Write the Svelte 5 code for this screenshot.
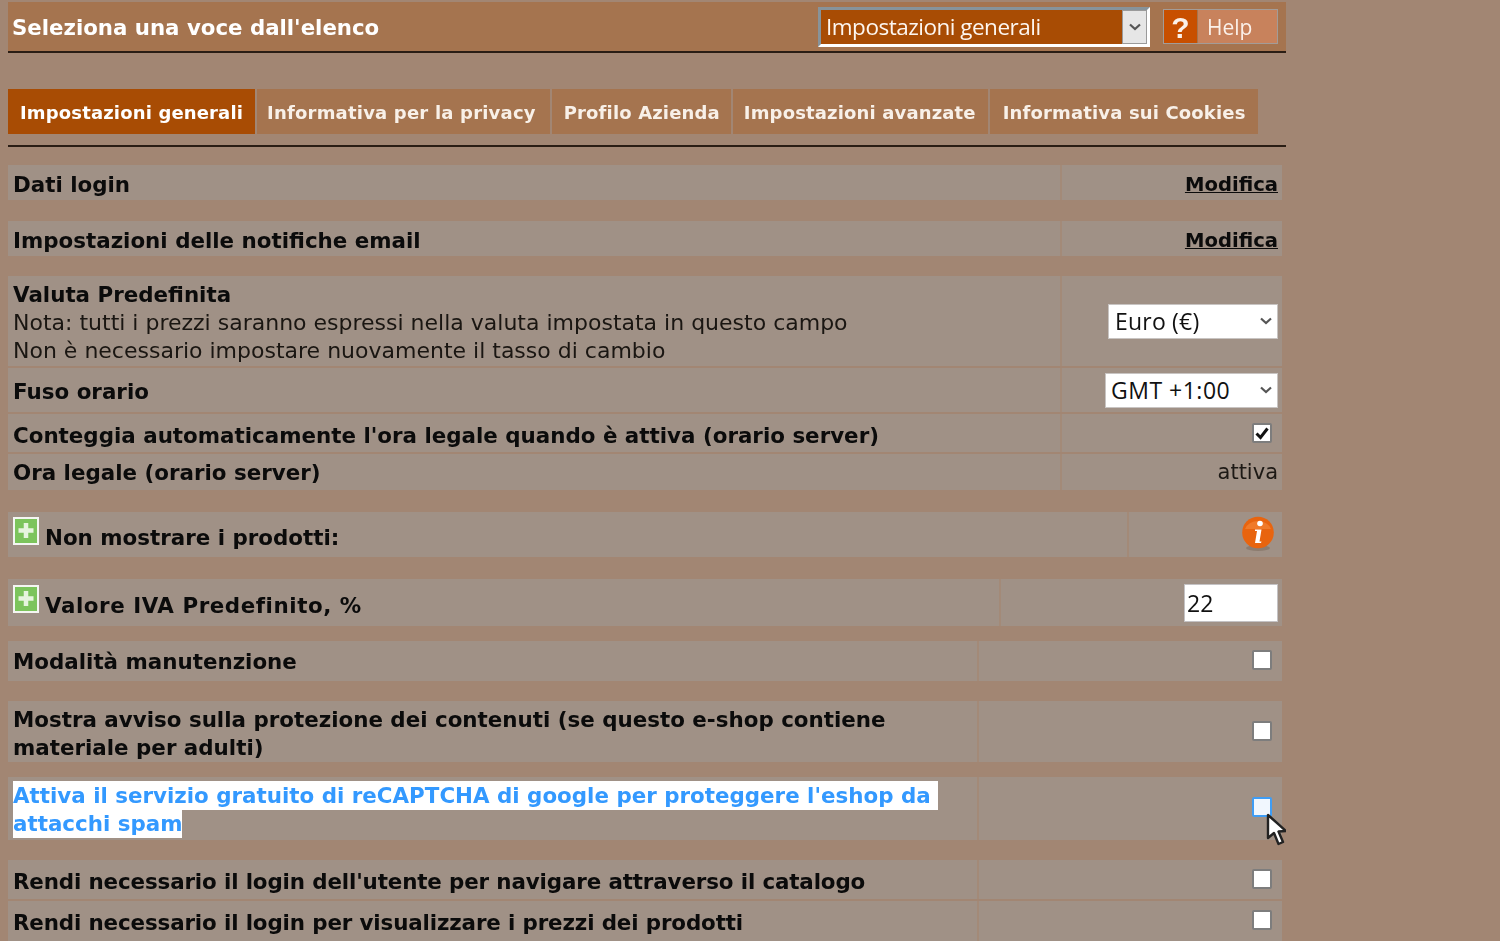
<script>
	const tabs = ['Impostazioni generali', 'Informativa per la privacy', 'Profilo Azienda', 'Impostazioni avanzate', 'Informativa sui Cookies'];
</script>

{#snippet check(on = false, focus = false)}
	<span class="check" class:focus>
		{#if on}
			<svg viewBox="0 0 16 16" width="16" height="16"><path d="M2.5 8.5 L6.5 12.5 L13.5 3.5" fill="none" stroke="#111" stroke-width="3"/></svg>
		{/if}
	</span>
{/snippet}

{#snippet plus()}
	<span class="plus"><svg viewBox="0 0 26 28" width="26" height="28"><rect x="1" y="1" width="24" height="26" fill="#7cc45c" stroke="#f4f6f2" stroke-width="2"/><path d="M13 6v15M5.500 13.500h15" stroke="#e6f4de" stroke-width="4.500"/></svg></span>
{/snippet}

{#snippet chevron()}
	<svg class="chev" viewBox="0 0 12 8" width="12" height="8"><path d="M1 1.500 L6 6 L11 1.500" fill="none" stroke="#555" stroke-width="2.200"/></svg>
{/snippet}

<main>
	<header class="top">
		<h1>Seleziona una voce dall'elenco</h1>
		<div class="top-select">
			<span>Impostazioni generali</span>
			<i>{@render chevron()}</i>
		</div>
		<a class="help" href="#help"><b>?</b><span>Help</span></a>
	</header>

	<nav class="tabs">
		{#each tabs as tab, i}
			<a href="#tab" class:active={i === 0}>{tab}</a>
		{/each}
	</nav>

	<section class="rows">
		<div class="row wide h35">
			<div class="label">Dati login</div>
			<div class="val"><a href="#edit">Modifica</a></div>
		</div>
		<div class="row wide h35 gap21">
			<div class="label">Impostazioni delle notifiche email</div>
			<div class="val"><a href="#edit">Modifica</a></div>
		</div>

		<div class="row wide gap20 h90">
			<div class="label">
				Valuta Predefinita
				<p>Nota: tutti i prezzi saranno espressi nella valuta impostata in questo campo</p>
				<p>Non è necessario impostare nuovamente il tasso di cambio</p>
			</div>
			<div class="val"><div class="select w170">Euro (€){@render chevron()}</div></div>
		</div>
		<div class="row wide thin h44">
			<div class="label">Fuso orario</div>
			<div class="val"><div class="select w173">GMT +1:00{@render chevron()}</div></div>
		</div>
		<div class="row wide thin h38">
			<div class="label">Conteggia automaticamente l'ora legale quando è attiva (orario server)</div>
			<div class="val up">{@render check(true)}</div>
		</div>
		<div class="row wide thin h36">
			<div class="label">Ora legale (orario server)</div>
			<div class="val plain">attiva</div>
		</div>

		<div class="row info gap22 h45">
			<div class="label icon">{@render plus()}Non mostrare i prodotti:</div>
			<div class="val">
				<svg class="i" viewBox="0 0 34 36" width="34" height="36">
					<ellipse cx="17" cy="32" rx="12" ry="3" fill="#7a675a" opacity="0.5"/>
					<circle cx="17" cy="16.500" r="15.800" fill="#e8640f"/>
					<path d="M4 13a13.500 11 0 0 1 26 0z" fill="#f5893a" opacity="0.6"/>
					<circle cx="19" cy="7.500" r="2.800" fill="#fff"/>
					<path d="M14 13.500h6.500l-2 12h2l-.5 1.500h-6l2-12h-2z" fill="#fff"/>
				</svg>
			</div>
		</div>

		<div class="row vat gap22 h47">
			<div class="label icon loose">{@render plus()}Valore IVA Predefinito, %</div>
			<div class="val"><input class="field" value="22" /></div>
		</div>

		<div class="row main-col gap15 h40">
			<div class="label">Modalità manutenzione</div>
			<div class="val">{@render check()}</div>
		</div>
		<div class="row main-col gap20 h61">
			<div class="label">Mostra avviso sulla protezione dei contenuti (se questo e-shop contiene<br />materiale per adulti)</div>
			<div class="val">{@render check()}</div>
		</div>
		<div class="row main-col gap15 h63">
			<div class="label selected"><span class="picked">Attiva il servizio gratuito di reCAPTCHA di google per proteggere l'eshop da&nbsp;<br />attacchi spam</span></div>
			<div class="val up8">
				{@render check(false, true)}
				<svg class="cursor" viewBox="0 0 22 34" width="22" height="34">
					<path d="M2 2 L2 25 L8 20 L12.500 31 L17 29 L12.500 18.500 L20 18 Z" fill="#fff" stroke="#222" stroke-width="2.400" stroke-linejoin="round"/>
				</svg>
			</div>
		</div>
		<div class="row main-col gap20 h39">
			<div class="label tight">Rendi necessario il login dell'utente per navigare attraverso il catalogo</div>
			<div class="val">{@render check()}</div>
		</div>
		<div class="row main-col thin h40">
			<div class="label tight">Rendi necessario il login per visualizzare i prezzi dei prodotti</div>
			<div class="val">{@render check()}</div>
		</div>
	</section>
</main>

<style>
	:global(body) {
		margin: 0;
		background: #a28673;
	}

	main {
		width: 1278px;
		height: 941px;
		margin-left: 8px;
		padding-top: 2px;
		box-sizing: border-box;
		overflow: hidden;
		font-family: "DejaVu Sans", Verdana, sans-serif;
		filter: blur(0.4px);
	}

	.top {
		display: flex;
		align-items: center;
		height: 49px;
		margin-left: -2px;
		padding-left: 6px;
		background: #a5744f;
		border-bottom: 2px solid #2a1d14;
	}

	h1 {
		flex: 1;
		margin: 0;
		padding-top: 2px;
		color: #fff;
		font-size: 21.300px;
		font-weight: 700;
	}

	.top-select {
		display: flex;
		width: 332px;
		height: 40px;
		box-sizing: border-box;
		border: 3px solid #fff;
		border-top-color: #87939a;
		border-left-color: #87939a;
		background: #a84c04;
		color: #fdf6f0;
		font-size: 22.500px;
		font-family: "Open Sans", "DejaVu Sans", sans-serif;
	}

	.top-select span {
		flex: 1;
		padding: 1px 0 0 5px;
		line-height: 32px;
		letter-spacing: -0.500px;
	}

	.top-select i {
		display: flex;
		width: 25px;
		align-items: center;
		justify-content: center;
		background: #e6e6e6;
		border: 1px solid #9a9a9a;
		box-sizing: border-box;
	}

	.help {
		display: flex;
		width: 115px;
		height: 35px;
		margin: 0 8px 0 13px;
		box-sizing: border-box;
		border: 1px solid #a39c98;
		color: #fbf1ea;
		text-decoration: none;
		font-size: 21px;
		line-height: 35px;
	}

	.help b {
		width: 33px;
		background: #c84f00;
		text-align: center;
		font-size: 30px;
		font-family: "Liberation Sans", sans-serif;
		margin-right: 1px;
	}

	.help span {
		flex: 1;
		background: #c8825c;
		padding-left: 9px;
		font-family: "Open Sans", sans-serif;
	}

	.tabs {
		display: flex;
		gap: 2px;
		height: 45px;
		margin-top: 36px;
		padding-bottom: 11px;
		border-bottom: 2px solid #2a1d14;
	}

	.tabs a {
		padding: 0 12px;
		background: #a5744f;
		color: #f8f0e8;
		font-size: 18px;
		font-weight: 700;
		line-height: 47px;
		letter-spacing: 0.150px;
		text-decoration: none;
	}

	.tabs a:nth-child(2) { padding: 0 14px 0 10px; letter-spacing: 0.200px; }
	.tabs a:nth-child(3) { padding-right: 11px; }
	.tabs a:nth-child(4) { padding-left: 11px; }
	.tabs a:nth-child(5) { padding-left: 13px; }

	.tabs a.active {
		background: #a84c04;
		color: #fff;
	}

	.rows {
		padding-top: 18px;
		width: 1274px;
	}

	.row {
		display: grid;
		background: #a09186;
		color: #0b0b0b;
		font-size: 21.400px;
		line-height: 28px;
	}

	.row.wide { grid-template-columns: 1052px 1fr; }
	.row.info { grid-template-columns: 1119px 1fr; }
	.row.vat { grid-template-columns: 991px 1fr; }
	.row.main-col { grid-template-columns: 969px 1fr; }

	.gap15 { margin-top: 15px; }
	.gap20 { margin-top: 20px; }
	.gap21 { margin-top: 21px; }
	.gap22 { margin-top: 22px; }
	.thin { margin-top: 2px; }
	.h35 { height: 35px; }
	.h36 { height: 36px; }
	.h38 { height: 38px; }
	.h39 { height: 39px; }
	.h40 { height: 40px; }
	.h44 { height: 44px; }
	.h45 { height: 45px; }
	.h47 { height: 47px; }
	.h61 { height: 61px; }
	.h63 { height: 63px; }
	.h90 { height: 90px; }

	.label {
		display: block;
		align-self: center;
		padding-top: 4px;
		padding-left: 5px;
		font-weight: 700;
	}

	.h38 .label { padding-top: 6px; }
	.h36 .label { padding-top: 2px; }
	.gap15.h40 .label { padding-top: 2px; }
	.label.selected { padding-top: 2px; }
	.label.tight { letter-spacing: -0.130px; }
	.label.loose { letter-spacing: 0.550px; }

	.label p {
		margin: 0;
		font-size: 22px;
		font-weight: 400;
		color: #1a1612;
	}

	.label.icon {
		display: flex;
		align-items: flex-end;
		gap: 6px;
		padding-top: 0;
	}

	.val {
		position: relative;
		display: flex;
		align-items: center;
		justify-content: flex-end;
		padding-right: 4px;
		border-left: 2px solid #a38a78;
		font-size: 21px;
	}

	.val a {
		padding-top: 5px;
		color: #0b0b0b;
		font-size: 19.600px;
		font-weight: 700;
	}

	.val.plain {
		font-weight: 400;
		color: #1d1915;
	}

	.row.main-col .val { padding-right: 10px; padding-bottom: 2px; }
	.row.vat .val { padding-right: 4px; }
	.row.info .val { padding-right: 7px; padding-bottom: 1px; }
	.val.up { padding-right: 10px; }
	.row.main-col .val.up8 { padding-bottom: 3px; }

	.select {
		display: flex;
		align-items: center;
		justify-content: space-between;
		height: 35px;
		box-sizing: border-box;
		padding: 0 5px 0 5px;
		background: #fff;
		border: 1px solid #c8c4c2;
		color: #111;
		font-family: "Open Sans", sans-serif;
		font-size: 23px;
		letter-spacing: 0.500px;
	}

	.w170 { width: 170px; letter-spacing: 0.200px; padding-left: 6px; }
	.w173 { width: 173px; }

	.chev { display: block; }

	.field {
		width: 94px;
		height: 38px;
		box-sizing: border-box;
		padding: 0 2px;
		border: 1px solid #c4c2c4;
		background: #fff;
		color: #111;
		font-family: "Open Sans", sans-serif;
		font-size: 23px;
		outline: none;
	}

	.check {
		display: flex;
		align-items: center;
		justify-content: center;
		width: 20px;
		height: 20px;
		box-sizing: border-box;
		background: #fff;
		border: 2px solid #7d7d7d;
		border-radius: 2px;
	}

	.check.focus {
		background: #f1f7fe;
		border-color: #3f9df5;
	}

	.cursor {
		position: absolute;
		right: -6px;
		top: 36px;
	}

	.picked {
		padding: 2px 0;
		background: #fff;
		color: #3399ff;
	}
</style>
